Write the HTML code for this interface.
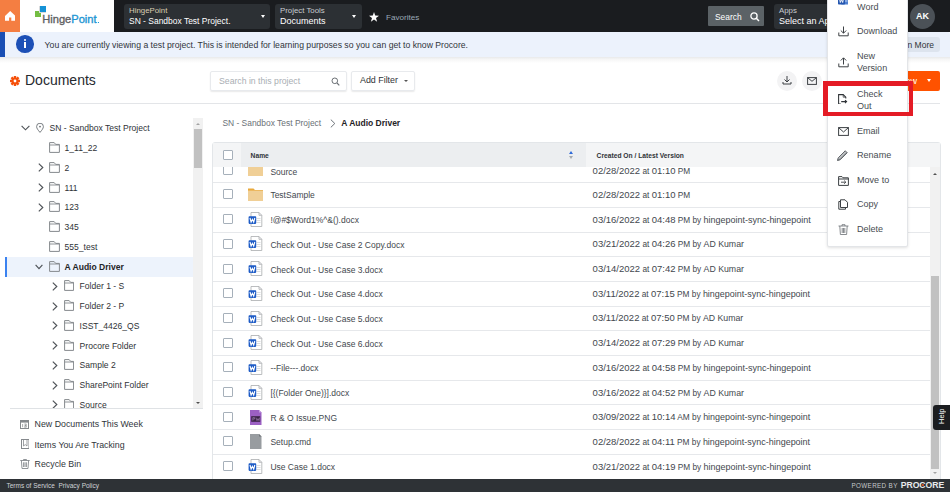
<!DOCTYPE html>
<html><head><meta charset="utf-8">
<style>
*{box-sizing:border-box;margin:0;padding:0}
html,body{width:950px;height:492px;overflow:hidden;background:#fff;font-family:"Liberation Sans",sans-serif;color:#2f3337}
.a{position:absolute;white-space:nowrap}
#nav{position:absolute;left:0;top:0;width:950px;height:31.6px;background:#1a1c1f}
#home{position:absolute;left:0;top:0;width:20px;height:31.6px;background:#f47e42}
#logo{position:absolute;left:20px;top:0;width:94px;height:31.6px;background:#fff}
.dd{position:absolute;top:4px;height:25px;background:#2c3034;border-radius:3px}
.dd .l1{position:absolute;left:5px;top:1.5px;font-size:7.85px;color:#c8ccd0;line-height:9px}
.dd .l2{position:absolute;left:5px;top:11.8px;font-size:9px;color:#fff;line-height:11px}
.caret{position:absolute;width:0;height:0;border-left:2.5px solid transparent;border-right:2.5px solid transparent;border-top:3px solid #fff}
#banner{position:absolute;left:0;top:31.8px;width:950px;height:24.8px;background:#ecf2fc;border-radius:0 2px 0 0}
#tree .r{position:absolute;height:20px;line-height:20px;font-size:8.6px;color:#2f3337}
</style></head><body>
<div id="nav">
  <div id="home">
    <svg class="a" style="left:4.7px;top:11.3px" width="10.4" height="9.8" viewBox="0 0 10.4 9.8"><path d="M5.2 0 L10.4 4.9 V9.8 H6.3 V6.5 H4.1 V9.8 H0 V4.9 Z" fill="#fff"/></svg>
  </div>
  <div id="logo">
    <div class="a" style="left:15px;top:10.9px;width:6.1px;height:6.4px;background:#74bd42"></div>
    <div class="a" style="left:18.9px;top:6.1px;width:7.1px;height:7.3px;background:#1592d6;border:0.6px solid #d8dadc;border-right:0;border-top:0"></div>
    <div class="a" style="left:22.3px;top:13.2px;font-size:11.1px;line-height:12px;color:#5f6163;-webkit-text-stroke:0.35px #5f6163">Hinge<span style="color:#2196d3;-webkit-text-stroke:0.35px #2196d3">Point</span></div><div class="a" style="left:78px;top:22px;width:1.3px;height:1.3px;background:#2196d3"></div>
  </div>
  <div class="dd" style="left:124px;width:146px">
    <div class="l1" style="color:#d9cdb0">HingePoint</div>
    <div class="l2" style="font-size:8.47px">SN - Sandbox Test Project.</div>
    <div class="caret" style="left:136.5px;top:11px"></div>
  </div>
  <div class="dd" style="left:275px;width:87px">
    <div class="l1">Project Tools</div>
    <div class="l2">Documents</div>
    <div class="caret" style="left:77px;top:11px"></div>
  </div>
  <svg class="a" style="left:369px;top:12px" width="10" height="10" viewBox="0 0 10 10"><path d="M5 0 L6.2 3.6 L10 3.7 L7 6 L8.1 9.7 L5 7.5 L1.9 9.7 L3 6 L0 3.7 L3.8 3.6 Z" fill="#fff"/></svg>
  <div class="a" style="left:386px;top:13px;font-size:8.1px;line-height:10px;color:#9aa8b6">Favorites</div>
  <div class="a" style="left:708px;top:6px;width:56px;height:20px;background:#5b6266;border-radius:1px">
    <div class="a" style="left:7px;top:6px;font-size:8.4px;line-height:10px;color:#fff">Search</div>
    <svg class="a" style="left:42px;top:6px" width="10" height="10" viewBox="0 0 10 10"><circle cx="4" cy="4" r="3.1" stroke="#fff" stroke-width="1.3" fill="none"/><path d="M6.3 6.3 L9 9" stroke="#fff" stroke-width="1.5"/></svg>
  </div>
  <div class="dd" style="left:774px;width:120px">
    <div class="l1">Apps</div>
    <div class="l2">Select an App</div>
  </div>
  <div class="a" style="left:910px;top:4px;width:25px;height:25px;border-radius:50%;background:#4b5157;color:#fff;font-size:9px;font-weight:bold;text-align:center;line-height:25px">AK</div>
</div>

<div id="banner">
  <div class="a" style="left:0;top:0;width:5px;height:25px;background:#1a4fb4"></div>
  <div class="a" style="left:16px;top:3.5px;width:17.5px;height:17.5px;border-radius:50%;background:#1d50b6"></div>
  <div class="a" style="left:23.5px;top:7px;width:2.4px;height:2.4px;border-radius:50%;background:#fff"></div>
  <div class="a" style="left:23.5px;top:10.5px;width:2.4px;height:6px;background:#fff"></div>
  <div class="a" style="left:44.6px;top:8.2px;font-size:8.66px;line-height:11px;color:#30353b">You are currently viewing a test project. This is intended for learning purposes so you can get to know Procore.</div>
  <div class="a" style="left:880px;top:5px;width:60px;height:15px;background:#dde4ee;border-radius:3px">
    <div class="a" style="left:10.5px;top:3px;font-size:8.5px;line-height:11px;color:#2f3337">Learn More</div>
  </div>
</div>
<div class="a" style="left:0;top:56.6px;width:950px;height:6.5px;background:linear-gradient(#e8e9ea,#f6f6f6 40%,#fff)"></div>

<!-- header -->
<svg class="a" style="left:10px;top:75.5px" width="10" height="10" viewBox="0 0 10 10"><g fill="#f5500a"><circle cx="5" cy="5" r="3.6"/><rect x="3.8" y="0" width="2.4" height="10"/><rect x="0" y="3.8" width="10" height="2.4"/><rect x="3.8" y="0" width="2.4" height="10" transform="rotate(45 5 5)"/><rect x="3.8" y="0" width="2.4" height="10" transform="rotate(-45 5 5)"/></g><circle cx="5" cy="5" r="1.4" fill="#fff"/></svg>
<div class="a" style="left:25px;top:72px;font-size:14px;line-height:16px;color:#262a2f">Documents</div>

<div class="a" style="left:210px;top:71px;width:137px;height:20px;border:1px solid #e8eaed;border-radius:2px;box-shadow:0 1px 1.5px rgba(0,0,0,.09)">
  <div class="a" style="left:8px;top:3.6px;font-size:8.7px;line-height:11px;color:#a9aeb3">Search in this project</div>
  <svg class="a" style="left:120px;top:5px" width="9" height="9" viewBox="0 0 9 9"><circle cx="3.8" cy="3.8" r="2.8" stroke="#6b7075" stroke-width="1" fill="none"/><path d="M6 6 L8.3 8.3" stroke="#6b7075" stroke-width="1.1"/></svg>
</div>
<div class="a" style="left:351px;top:71px;width:64px;height:20px;border:1px solid #e8eaed;border-radius:2px;box-shadow:0 1px 1.5px rgba(0,0,0,.09)">
  <div class="a" style="left:8px;top:3.4px;font-size:8.9px;line-height:11px;color:#2f3337">Add Filter</div>
  <div class="caret" style="left:52px;top:8px;border-top-color:#555;border-left-width:2.2px;border-right-width:2.2px;border-top-width:2.5px"></div>
</div>

<div class="a" style="left:777px;top:70.5px;width:20px;height:20px;border-radius:50%;background:#f3f3f4"></div>
<svg class="a" style="left:782px;top:75px" width="10" height="10" viewBox="0 0 10 10"><path d="M5 1 V7 M2.5 4.5 L5 7 L7.5 4.5 M1 7 V9 H9 V7" stroke="#3c4044" stroke-width="1" fill="none"/></svg>
<div class="a" style="left:802px;top:70.5px;width:20px;height:20px;border-radius:50%;background:#f3f3f4"></div>
<svg class="a" style="left:807px;top:76.8px" width="10" height="8" viewBox="0 0 10 8"><rect x="0.6" y="0.6" width="8.8" height="6.8" stroke="#3c4044" stroke-width="1" fill="none"/><path d="M0.8 0.8 L5 4.3 L9.2 0.8" stroke="#3c4044" stroke-width="1" fill="none"/></svg>

<div class="a" style="left:900px;top:71px;width:40px;height:19.5px;background:#ff5200;border-radius:2px">
  <div class="a" style="left:-1px;top:4.5px;font-size:9px;line-height:11px;color:#fff">New</div>
  <div class="caret" style="left:27.2px;top:7.8px;border-left-width:2.5px;border-right-width:2.5px;border-top-width:3.2px"></div>
</div>

<div class="a" style="left:10px;top:103px;width:930px;height:1px;background:#e3e5e8"></div>


<div class="a" style="left:0;top:118px;width:203px;height:290px;overflow:hidden">
<svg class="a" style="left:20.80px;top:7.25px" width="9" height="6" viewBox="0 0 9 6"><path d="M0.6 0.8 L4.5 4.8 L8.4 0.8" stroke="#4e5358" stroke-width="1.15" fill="none"/></svg>
<svg class="a" style="left:35.60px;top:4.95px" width="8" height="10" viewBox="0 0 8 10"><path d="M4 9.4 C2 7 0.6 5.3 0.6 3.6 A3.4 3.4 0 0 1 7.4 3.6 C7.4 5.3 6 7 4 9.4 Z" stroke="#6a6f74" stroke-width="0.9" fill="none"/><circle cx="4" cy="3.6" r="0.9" fill="#6a6f74"/></svg>
<div class="a" style="left:49.50px;top:4.25px;font-size:8.55px;line-height:12px;">SN - Sandbox Test Project</div>
<svg class="a" style="left:49.00px;top:24.10px" width="11.0" height="11" viewBox="0 0 11.0 11"><path d="M0.6 10.4 V0.6 H5.2 L6.7 2.4 H10.4 V10.4 Z" stroke="#85898d" stroke-width="1" fill="none"/><path d="M0.6 3 H10.4" stroke="#85898d" stroke-width="0.9"/></svg>
<div class="a" style="left:64.60px;top:24.00px;font-size:8.55px;line-height:12px;">1_11_22</div>
<svg class="a" style="left:37.50px;top:45.25px" width="6" height="9" viewBox="0 0 6 9"><path d="M0.8 0.6 L4.8 4.5 L0.8 8.4" stroke="#4e5358" stroke-width="1.15" fill="none"/></svg>
<svg class="a" style="left:49.00px;top:43.85px" width="11.0" height="11" viewBox="0 0 11.0 11"><path d="M0.6 10.4 V0.6 H5.2 L6.7 2.4 H10.4 V10.4 Z" stroke="#85898d" stroke-width="1" fill="none"/><path d="M0.6 3 H10.4" stroke="#85898d" stroke-width="0.9"/></svg>
<div class="a" style="left:64.60px;top:43.75px;font-size:8.55px;line-height:12px;">2</div>
<svg class="a" style="left:37.50px;top:65.00px" width="6" height="9" viewBox="0 0 6 9"><path d="M0.8 0.6 L4.8 4.5 L0.8 8.4" stroke="#4e5358" stroke-width="1.15" fill="none"/></svg>
<svg class="a" style="left:49.00px;top:63.60px" width="11.0" height="11" viewBox="0 0 11.0 11"><path d="M0.6 10.4 V0.6 H5.2 L6.7 2.4 H10.4 V10.4 Z" stroke="#85898d" stroke-width="1" fill="none"/><path d="M0.6 3 H10.4" stroke="#85898d" stroke-width="0.9"/></svg>
<div class="a" style="left:64.60px;top:63.50px;font-size:8.55px;line-height:12px;">111</div>
<svg class="a" style="left:37.50px;top:84.75px" width="6" height="9" viewBox="0 0 6 9"><path d="M0.8 0.6 L4.8 4.5 L0.8 8.4" stroke="#4e5358" stroke-width="1.15" fill="none"/></svg>
<svg class="a" style="left:49.00px;top:83.35px" width="11.0" height="11" viewBox="0 0 11.0 11"><path d="M0.6 10.4 V0.6 H5.2 L6.7 2.4 H10.4 V10.4 Z" stroke="#85898d" stroke-width="1" fill="none"/><path d="M0.6 3 H10.4" stroke="#85898d" stroke-width="0.9"/></svg>
<div class="a" style="left:64.60px;top:83.25px;font-size:8.55px;line-height:12px;">123</div>
<svg class="a" style="left:49.00px;top:103.10px" width="11.0" height="11" viewBox="0 0 11.0 11"><path d="M0.6 10.4 V0.6 H5.2 L6.7 2.4 H10.4 V10.4 Z" stroke="#85898d" stroke-width="1" fill="none"/><path d="M0.6 3 H10.4" stroke="#85898d" stroke-width="0.9"/></svg>
<div class="a" style="left:64.60px;top:103.00px;font-size:8.55px;line-height:12px;">345</div>
<svg class="a" style="left:49.00px;top:122.85px" width="11.0" height="11" viewBox="0 0 11.0 11"><path d="M0.6 10.4 V0.6 H5.2 L6.7 2.4 H10.4 V10.4 Z" stroke="#85898d" stroke-width="1" fill="none"/><path d="M0.6 3 H10.4" stroke="#85898d" stroke-width="0.9"/></svg>
<div class="a" style="left:64.60px;top:122.75px;font-size:8.55px;line-height:12px;">555_test</div>
<div class="a" style="left:5px;top:138.50px;width:188px;height:20px;background:#edf3fc"></div>
<div class="a" style="left:5px;top:138.50px;width:2px;height:20px;background:#3b82f0"></div>
<svg class="a" style="left:35.40px;top:145.50px" width="8" height="6" viewBox="0 0 8 6"><path d="M0.6 0.8 L4 4.6 L7.4 0.8" stroke="#4e5358" stroke-width="1.15" fill="none"/></svg>
<svg class="a" style="left:49.00px;top:142.60px" width="11.0" height="11" viewBox="0 0 11.0 11"><path d="M0.6 10.4 V0.6 H5.2 L6.7 2.4 H10.4 V10.4 Z" stroke="#85898d" stroke-width="1" fill="none"/><path d="M0.6 3 H10.4" stroke="#85898d" stroke-width="0.9"/></svg>
<div class="a" style="left:64.60px;top:142.50px;font-size:8.55px;line-height:12px;font-weight:bold;color:#1f2327;">A Audio Driver</div>
<svg class="a" style="left:52.40px;top:163.75px" width="6" height="9" viewBox="0 0 6 9"><path d="M0.8 0.6 L4.8 4.5 L0.8 8.4" stroke="#4e5358" stroke-width="1.15" fill="none"/></svg>
<svg class="a" style="left:64.00px;top:162.35px" width="10.2" height="11" viewBox="0 0 10.2 11"><path d="M0.6 10.4 V0.6 H5.2 L6.7 2.4 H9.6 V10.4 Z" stroke="#85898d" stroke-width="1" fill="none"/><path d="M0.6 3 H9.6" stroke="#85898d" stroke-width="0.9"/></svg>
<div class="a" style="left:79.60px;top:162.25px;font-size:8.55px;line-height:12px;">Folder 1 - S</div>
<svg class="a" style="left:52.40px;top:183.50px" width="6" height="9" viewBox="0 0 6 9"><path d="M0.8 0.6 L4.8 4.5 L0.8 8.4" stroke="#4e5358" stroke-width="1.15" fill="none"/></svg>
<svg class="a" style="left:64.00px;top:182.10px" width="10.2" height="11" viewBox="0 0 10.2 11"><path d="M0.6 10.4 V0.6 H5.2 L6.7 2.4 H9.6 V10.4 Z" stroke="#85898d" stroke-width="1" fill="none"/><path d="M0.6 3 H9.6" stroke="#85898d" stroke-width="0.9"/></svg>
<div class="a" style="left:79.60px;top:182.00px;font-size:8.55px;line-height:12px;">Folder 2 - P</div>
<svg class="a" style="left:52.40px;top:203.25px" width="6" height="9" viewBox="0 0 6 9"><path d="M0.8 0.6 L4.8 4.5 L0.8 8.4" stroke="#4e5358" stroke-width="1.15" fill="none"/></svg>
<svg class="a" style="left:64.00px;top:201.85px" width="10.2" height="11" viewBox="0 0 10.2 11"><path d="M0.6 10.4 V0.6 H5.2 L6.7 2.4 H9.6 V10.4 Z" stroke="#85898d" stroke-width="1" fill="none"/><path d="M0.6 3 H9.6" stroke="#85898d" stroke-width="0.9"/></svg>
<div class="a" style="left:79.60px;top:201.75px;font-size:8.55px;line-height:12px;">ISST_4426_QS</div>
<svg class="a" style="left:52.40px;top:223.00px" width="6" height="9" viewBox="0 0 6 9"><path d="M0.8 0.6 L4.8 4.5 L0.8 8.4" stroke="#4e5358" stroke-width="1.15" fill="none"/></svg>
<svg class="a" style="left:64.00px;top:221.60px" width="10.2" height="11" viewBox="0 0 10.2 11"><path d="M0.6 10.4 V0.6 H5.2 L6.7 2.4 H9.6 V10.4 Z" stroke="#85898d" stroke-width="1" fill="none"/><path d="M0.6 3 H9.6" stroke="#85898d" stroke-width="0.9"/></svg>
<div class="a" style="left:79.60px;top:221.50px;font-size:8.55px;line-height:12px;">Procore Folder</div>
<svg class="a" style="left:52.40px;top:242.75px" width="6" height="9" viewBox="0 0 6 9"><path d="M0.8 0.6 L4.8 4.5 L0.8 8.4" stroke="#4e5358" stroke-width="1.15" fill="none"/></svg>
<svg class="a" style="left:64.00px;top:241.35px" width="10.2" height="11" viewBox="0 0 10.2 11"><path d="M0.6 10.4 V0.6 H5.2 L6.7 2.4 H9.6 V10.4 Z" stroke="#85898d" stroke-width="1" fill="none"/><path d="M0.6 3 H9.6" stroke="#85898d" stroke-width="0.9"/></svg>
<div class="a" style="left:79.60px;top:241.25px;font-size:8.55px;line-height:12px;">Sample 2</div>
<svg class="a" style="left:52.40px;top:262.50px" width="6" height="9" viewBox="0 0 6 9"><path d="M0.8 0.6 L4.8 4.5 L0.8 8.4" stroke="#4e5358" stroke-width="1.15" fill="none"/></svg>
<svg class="a" style="left:64.00px;top:261.10px" width="10.2" height="11" viewBox="0 0 10.2 11"><path d="M0.6 10.4 V0.6 H5.2 L6.7 2.4 H9.6 V10.4 Z" stroke="#85898d" stroke-width="1" fill="none"/><path d="M0.6 3 H9.6" stroke="#85898d" stroke-width="0.9"/></svg>
<div class="a" style="left:79.60px;top:261.00px;font-size:8.55px;line-height:12px;">SharePoint Folder</div>
<svg class="a" style="left:52.40px;top:282.25px" width="6" height="9" viewBox="0 0 6 9"><path d="M0.8 0.6 L4.8 4.5 L0.8 8.4" stroke="#4e5358" stroke-width="1.15" fill="none"/></svg>
<svg class="a" style="left:64.00px;top:280.85px" width="10.2" height="11" viewBox="0 0 10.2 11"><path d="M0.6 10.4 V0.6 H5.2 L6.7 2.4 H9.6 V10.4 Z" stroke="#85898d" stroke-width="1" fill="none"/><path d="M0.6 3 H9.6" stroke="#85898d" stroke-width="0.9"/></svg>
<div class="a" style="left:79.60px;top:280.75px;font-size:8.55px;line-height:12px;">Source</div>
</div>
<div class="a" style="left:193px;top:118px;width:10px;height:290px;background:#f1f1f1"></div>
<div class="a" style="left:194px;top:129px;width:8px;height:39px;background:#c1c1c1"></div>
<div class="caret" style="left:195.5px;top:122.5px;border-top:0;border-bottom:2.5px solid #a3a3a3;border-left-width:2.5px;border-right-width:2.5px"></div>
<div class="caret" style="left:195.5px;top:401.5px;border-top:2.5px solid #505050;border-left-width:2.5px;border-right-width:2.5px"></div>
<div class="a" style="left:10px;top:408px;width:193px;height:1px;background:#dfe2e5"></div>
<svg class="a" style="left:20px;top:420.00px" width="9" height="9" viewBox="0 0 9 9"><rect x="0.5" y="0.5" width="8" height="8" stroke="#85898d" stroke-width="1" fill="none"/><path d="M0.5 1.8 H8.5" stroke="#85898d" stroke-width="1.6"/><path d="M2.6 4 V7.2 M4.4 4 H6.4 L4.6 7.2 M4.4 5.3 H6.3 V7.2 H4.4" stroke="#85898d" stroke-width="0.7" fill="none"/></svg>
<div class="a" style="left:34.6px;top:418.30px;font-size:8.8px;line-height:12px;color:#30353a">New Documents This Week</div>
<svg class="a" style="left:20.7px;top:439.00px" width="8.5" height="10" viewBox="0 0 8.5 10"><rect x="0.5" y="0.5" width="7.5" height="9" stroke="#85898d" stroke-width="1" fill="none"/><path d="M2.5 1 V7 L4.25 5.6 L6 7 V1" stroke="#85898d" stroke-width="0.8" fill="none"/></svg>
<div class="a" style="left:34.6px;top:438.50px;font-size:8.8px;line-height:12px;color:#30353a">Items You Are Tracking</div>
<svg class="a" style="left:20px;top:459.10px" width="10" height="10" viewBox="0 0 10 10"><path d="M0.3 1.5 H9.7 M3.5 1.5 V0.5 H6.5 V1.5 M1.4 1.5 L2 9.5 H8 L8.6 1.5 M3.6 3.3 V8 M5 3.3 V8 M6.4 3.3 V8" stroke="#85898d" stroke-width="0.9" fill="none"/></svg>
<div class="a" style="left:34.6px;top:458.10px;font-size:8.8px;line-height:12px;color:#30353a">Recycle Bin</div>
<div class="a" style="left:222.4px;top:117.7px;font-size:8.45px;line-height:11px;color:#6b7177">SN - Sandbox Test Project</div>
<svg class="a" style="left:329.5px;top:118.5px" width="6" height="9" viewBox="0 0 6 9"><path d="M0.8 0.6 L4.8 4.5 L0.8 8.4" stroke="#6b7177" stroke-width="1" fill="none"/></svg>
<div class="a" style="left:341.3px;top:117.7px;font-size:8.5px;line-height:11px;font-weight:bold;color:#1f2327">A Audio Driver</div>
<div class="a" style="left:212px;top:141.5px;width:728.5px;height:340px;border:1px solid #e3e6e9;border-radius:3px"></div>
<div class="a" style="left:213px;top:167px;width:717px;height:311.5px;overflow:hidden">
<div class="a" style="left:9.80px;top:-2.25px;width:10px;height:10px;border:1px solid #a6b0ba;border-radius:1px"></div>
<svg class="a" style="left:35.00px;top:-3.75px" width="15" height="13" viewBox="0 0 15 13"><path d="M0 0.5 H5.5 L7 2 H15 V13 H0 Z" fill="#e9a93c"/><rect x="0" y="2.6" width="15" height="10.4" fill="#f0cf96"/></svg>
<div class="a" style="left:57.40px;top:-0.85px;font-size:8.5px;line-height:12px;color:#43484e">Source</div>
<div class="a" style="left:379.60px;top:-1.85px;font-size:8.3px;line-height:12px;color:#43484e"><span style="font-size:9.5px">02/28/2022</span> at <span style="font-size:9.5px">01:10</span> PM</div>
<div class="a" style="left:0;top:15.10px;width:717px;height:1px;background:#e6e8eb"></div>
<div class="a" style="left:9.80px;top:22.45px;width:10px;height:10px;border:1px solid #a6b0ba;border-radius:1px"></div>
<svg class="a" style="left:35.00px;top:20.95px" width="15" height="13" viewBox="0 0 15 13"><path d="M0 0.5 H5.5 L7 2 H15 V13 H0 Z" fill="#e9a93c"/><rect x="0" y="2.6" width="15" height="10.4" fill="#f0cf96"/></svg>
<div class="a" style="left:57.40px;top:22.45px;font-size:8.5px;line-height:12px;color:#43484e">TestSample</div>
<div class="a" style="left:379.60px;top:21.95px;font-size:8.3px;line-height:12px;color:#43484e"><span style="font-size:9.5px">02/28/2022</span> at <span style="font-size:9.5px">01:10</span> PM</div>
<div class="a" style="left:0;top:39.80px;width:717px;height:1px;background:#e6e8eb"></div>
<div class="a" style="left:9.80px;top:47.15px;width:10px;height:10px;border:1px solid #a6b0ba;border-radius:1px"></div>
<svg class="a" style="left:35.30px;top:44.75px" width="15" height="15" viewBox="0 0 15 15"><path d="M3 0.5 H11 L13.8 3.3 V14.5 H3 Z" fill="#fff" stroke="#a9acaf" stroke-width="0.8"/><path d="M11 0.5 V3.3 H13.8" fill="none" stroke="#a9acaf" stroke-width="0.8"/><path d="M8.5 6.5 H12.5 M8.5 8.5 H12.5 M8.5 10.5 H12.5" stroke="#c4c7ca" stroke-width="0.6"/><rect x="0.6" y="4.3" width="7.6" height="7.6" rx="0.8" fill="#1d5bc6"/><path d="M2 6 L3.1 10.2 L4.4 7.3 L5.7 10.2 L6.8 6" stroke="#fff" stroke-width="1.1" fill="none"/></svg>
<div class="a" style="left:57.40px;top:47.15px;font-size:8.5px;line-height:12px;color:#43484e">!@#$Word1%^&amp;().docx</div>
<div class="a" style="left:379.60px;top:46.65px;font-size:8.3px;line-height:12px;color:#43484e"><span style="font-size:9.5px">03/16/2022</span> at <span style="font-size:9.5px">04:48</span> PM by <span style="font-size:8.98px">hingepoint-sync-hingepoint</span></div>
<div class="a" style="left:0;top:64.50px;width:717px;height:1px;background:#e6e8eb"></div>
<div class="a" style="left:9.80px;top:71.85px;width:10px;height:10px;border:1px solid #a6b0ba;border-radius:1px"></div>
<svg class="a" style="left:35.30px;top:69.45px" width="15" height="15" viewBox="0 0 15 15"><path d="M3 0.5 H11 L13.8 3.3 V14.5 H3 Z" fill="#fff" stroke="#a9acaf" stroke-width="0.8"/><path d="M11 0.5 V3.3 H13.8" fill="none" stroke="#a9acaf" stroke-width="0.8"/><path d="M8.5 6.5 H12.5 M8.5 8.5 H12.5 M8.5 10.5 H12.5" stroke="#c4c7ca" stroke-width="0.6"/><rect x="0.6" y="4.3" width="7.6" height="7.6" rx="0.8" fill="#1d5bc6"/><path d="M2 6 L3.1 10.2 L4.4 7.3 L5.7 10.2 L6.8 6" stroke="#fff" stroke-width="1.1" fill="none"/></svg>
<div class="a" style="left:57.40px;top:71.85px;font-size:8.5px;line-height:12px;color:#43484e">Check Out - Use Case 2 Copy.docx</div>
<div class="a" style="left:379.60px;top:71.35px;font-size:8.3px;line-height:12px;color:#43484e"><span style="font-size:9.5px">03/21/2022</span> at <span style="font-size:9.5px">04:26</span> PM by <span style="font-size:8.76px">AD Kumar</span></div>
<div class="a" style="left:0;top:89.20px;width:717px;height:1px;background:#e6e8eb"></div>
<div class="a" style="left:9.80px;top:96.55px;width:10px;height:10px;border:1px solid #a6b0ba;border-radius:1px"></div>
<svg class="a" style="left:35.30px;top:94.15px" width="15" height="15" viewBox="0 0 15 15"><path d="M3 0.5 H11 L13.8 3.3 V14.5 H3 Z" fill="#fff" stroke="#a9acaf" stroke-width="0.8"/><path d="M11 0.5 V3.3 H13.8" fill="none" stroke="#a9acaf" stroke-width="0.8"/><path d="M8.5 6.5 H12.5 M8.5 8.5 H12.5 M8.5 10.5 H12.5" stroke="#c4c7ca" stroke-width="0.6"/><rect x="0.6" y="4.3" width="7.6" height="7.6" rx="0.8" fill="#1d5bc6"/><path d="M2 6 L3.1 10.2 L4.4 7.3 L5.7 10.2 L6.8 6" stroke="#fff" stroke-width="1.1" fill="none"/></svg>
<div class="a" style="left:57.40px;top:96.55px;font-size:8.5px;line-height:12px;color:#43484e">Check Out - Use Case 3.docx</div>
<div class="a" style="left:379.60px;top:96.05px;font-size:8.3px;line-height:12px;color:#43484e"><span style="font-size:9.5px">03/14/2022</span> at <span style="font-size:9.5px">07:42</span> PM by <span style="font-size:8.76px">AD Kumar</span></div>
<div class="a" style="left:0;top:113.90px;width:717px;height:1px;background:#e6e8eb"></div>
<div class="a" style="left:9.80px;top:121.25px;width:10px;height:10px;border:1px solid #a6b0ba;border-radius:1px"></div>
<svg class="a" style="left:35.30px;top:118.85px" width="15" height="15" viewBox="0 0 15 15"><path d="M3 0.5 H11 L13.8 3.3 V14.5 H3 Z" fill="#fff" stroke="#a9acaf" stroke-width="0.8"/><path d="M11 0.5 V3.3 H13.8" fill="none" stroke="#a9acaf" stroke-width="0.8"/><path d="M8.5 6.5 H12.5 M8.5 8.5 H12.5 M8.5 10.5 H12.5" stroke="#c4c7ca" stroke-width="0.6"/><rect x="0.6" y="4.3" width="7.6" height="7.6" rx="0.8" fill="#1d5bc6"/><path d="M2 6 L3.1 10.2 L4.4 7.3 L5.7 10.2 L6.8 6" stroke="#fff" stroke-width="1.1" fill="none"/></svg>
<div class="a" style="left:57.40px;top:121.25px;font-size:8.5px;line-height:12px;color:#43484e">Check Out - Use Case 4.docx</div>
<div class="a" style="left:379.60px;top:120.75px;font-size:8.3px;line-height:12px;color:#43484e"><span style="font-size:9.5px">03/11/2022</span> at <span style="font-size:9.5px">07:15</span> PM by <span style="font-size:8.98px">hingepoint-sync-hingepoint</span></div>
<div class="a" style="left:0;top:138.60px;width:717px;height:1px;background:#e6e8eb"></div>
<div class="a" style="left:9.80px;top:145.95px;width:10px;height:10px;border:1px solid #a6b0ba;border-radius:1px"></div>
<svg class="a" style="left:35.30px;top:143.55px" width="15" height="15" viewBox="0 0 15 15"><path d="M3 0.5 H11 L13.8 3.3 V14.5 H3 Z" fill="#fff" stroke="#a9acaf" stroke-width="0.8"/><path d="M11 0.5 V3.3 H13.8" fill="none" stroke="#a9acaf" stroke-width="0.8"/><path d="M8.5 6.5 H12.5 M8.5 8.5 H12.5 M8.5 10.5 H12.5" stroke="#c4c7ca" stroke-width="0.6"/><rect x="0.6" y="4.3" width="7.6" height="7.6" rx="0.8" fill="#1d5bc6"/><path d="M2 6 L3.1 10.2 L4.4 7.3 L5.7 10.2 L6.8 6" stroke="#fff" stroke-width="1.1" fill="none"/></svg>
<div class="a" style="left:57.40px;top:145.95px;font-size:8.5px;line-height:12px;color:#43484e">Check Out - Use Case 5.docx</div>
<div class="a" style="left:379.60px;top:145.45px;font-size:8.3px;line-height:12px;color:#43484e"><span style="font-size:9.5px">03/11/2022</span> at <span style="font-size:9.5px">07:50</span> PM by <span style="font-size:8.76px">AD Kumar</span></div>
<div class="a" style="left:0;top:163.30px;width:717px;height:1px;background:#e6e8eb"></div>
<div class="a" style="left:9.80px;top:170.65px;width:10px;height:10px;border:1px solid #a6b0ba;border-radius:1px"></div>
<svg class="a" style="left:35.30px;top:168.25px" width="15" height="15" viewBox="0 0 15 15"><path d="M3 0.5 H11 L13.8 3.3 V14.5 H3 Z" fill="#fff" stroke="#a9acaf" stroke-width="0.8"/><path d="M11 0.5 V3.3 H13.8" fill="none" stroke="#a9acaf" stroke-width="0.8"/><path d="M8.5 6.5 H12.5 M8.5 8.5 H12.5 M8.5 10.5 H12.5" stroke="#c4c7ca" stroke-width="0.6"/><rect x="0.6" y="4.3" width="7.6" height="7.6" rx="0.8" fill="#1d5bc6"/><path d="M2 6 L3.1 10.2 L4.4 7.3 L5.7 10.2 L6.8 6" stroke="#fff" stroke-width="1.1" fill="none"/></svg>
<div class="a" style="left:57.40px;top:170.65px;font-size:8.5px;line-height:12px;color:#43484e">Check Out - Use Case 6.docx</div>
<div class="a" style="left:379.60px;top:170.15px;font-size:8.3px;line-height:12px;color:#43484e"><span style="font-size:9.5px">03/14/2022</span> at <span style="font-size:9.5px">07:29</span> PM by <span style="font-size:8.76px">AD Kumar</span></div>
<div class="a" style="left:0;top:188.00px;width:717px;height:1px;background:#e6e8eb"></div>
<div class="a" style="left:9.80px;top:195.35px;width:10px;height:10px;border:1px solid #a6b0ba;border-radius:1px"></div>
<svg class="a" style="left:35.30px;top:192.95px" width="15" height="15" viewBox="0 0 15 15"><path d="M3 0.5 H11 L13.8 3.3 V14.5 H3 Z" fill="#fff" stroke="#a9acaf" stroke-width="0.8"/><path d="M11 0.5 V3.3 H13.8" fill="none" stroke="#a9acaf" stroke-width="0.8"/><path d="M8.5 6.5 H12.5 M8.5 8.5 H12.5 M8.5 10.5 H12.5" stroke="#c4c7ca" stroke-width="0.6"/><rect x="0.6" y="4.3" width="7.6" height="7.6" rx="0.8" fill="#1d5bc6"/><path d="M2 6 L3.1 10.2 L4.4 7.3 L5.7 10.2 L6.8 6" stroke="#fff" stroke-width="1.1" fill="none"/></svg>
<div class="a" style="left:57.40px;top:195.35px;font-size:8.5px;line-height:12px;color:#43484e">--File---.docx</div>
<div class="a" style="left:379.60px;top:194.85px;font-size:8.3px;line-height:12px;color:#43484e"><span style="font-size:9.5px">03/16/2022</span> at <span style="font-size:9.5px">04:58</span> PM by <span style="font-size:8.98px">hingepoint-sync-hingepoint</span></div>
<div class="a" style="left:0;top:212.70px;width:717px;height:1px;background:#e6e8eb"></div>
<div class="a" style="left:9.80px;top:220.05px;width:10px;height:10px;border:1px solid #a6b0ba;border-radius:1px"></div>
<svg class="a" style="left:35.30px;top:217.65px" width="15" height="15" viewBox="0 0 15 15"><path d="M3 0.5 H11 L13.8 3.3 V14.5 H3 Z" fill="#fff" stroke="#a9acaf" stroke-width="0.8"/><path d="M11 0.5 V3.3 H13.8" fill="none" stroke="#a9acaf" stroke-width="0.8"/><path d="M8.5 6.5 H12.5 M8.5 8.5 H12.5 M8.5 10.5 H12.5" stroke="#c4c7ca" stroke-width="0.6"/><rect x="0.6" y="4.3" width="7.6" height="7.6" rx="0.8" fill="#1d5bc6"/><path d="M2 6 L3.1 10.2 L4.4 7.3 L5.7 10.2 L6.8 6" stroke="#fff" stroke-width="1.1" fill="none"/></svg>
<div class="a" style="left:57.40px;top:220.05px;font-size:8.5px;line-height:12px;color:#43484e">[{(Folder One)}].docx</div>
<div class="a" style="left:379.60px;top:219.55px;font-size:8.3px;line-height:12px;color:#43484e"><span style="font-size:9.5px">03/16/2022</span> at <span style="font-size:9.5px">04:52</span> PM by <span style="font-size:8.76px">AD Kumar</span></div>
<div class="a" style="left:0;top:237.40px;width:717px;height:1px;background:#e6e8eb"></div>
<div class="a" style="left:9.80px;top:244.75px;width:10px;height:10px;border:1px solid #a6b0ba;border-radius:1px"></div>
<svg class="a" style="left:36.60px;top:242.95px" width="12" height="15" viewBox="0 0 12 15"><path d="M0 0 H9 L11.5 2.5 V15 H0 Z" fill="#9c60c4"/><path d="M9 0 V2.5 H11.5 Z" fill="#c39be0"/><rect x="1.2" y="6.2" width="9" height="5.6" fill="#3b2347"/><path d="M2.8 10.6 V7.6 H4.6 V9 H2.8 M6 7.6 L7 10.6 L8 8.6 L9 10.6 L9.6 7.6" stroke="#a98bc0" stroke-width="0.6" fill="none"/></svg>
<div class="a" style="left:57.40px;top:244.75px;font-size:8.5px;line-height:12px;color:#43484e">R &amp; O Issue.PNG</div>
<div class="a" style="left:379.60px;top:244.25px;font-size:8.3px;line-height:12px;color:#43484e"><span style="font-size:9.5px">03/09/2022</span> at <span style="font-size:9.5px">10:14</span> AM by <span style="font-size:8.98px">hingepoint-sync-hingepoint</span></div>
<div class="a" style="left:0;top:262.10px;width:717px;height:1px;background:#e6e8eb"></div>
<div class="a" style="left:9.80px;top:269.45px;width:10px;height:10px;border:1px solid #a6b0ba;border-radius:1px"></div>
<svg class="a" style="left:36.60px;top:267.05px" width="12" height="15" viewBox="0 0 12 15"><path d="M0 0 H9 L11.5 2.5 V15 H0 Z" fill="#989ca0"/><path d="M9 0 V2.5 H11.5 Z" fill="#6f7377"/></svg>
<div class="a" style="left:57.40px;top:269.45px;font-size:8.5px;line-height:12px;color:#43484e">Setup.cmd</div>
<div class="a" style="left:379.60px;top:268.95px;font-size:8.3px;line-height:12px;color:#43484e"><span style="font-size:9.5px">02/28/2022</span> at <span style="font-size:9.5px">04:11</span> PM by <span style="font-size:8.98px">hingepoint-sync-hingepoint</span></div>
<div class="a" style="left:0;top:286.80px;width:717px;height:1px;background:#e6e8eb"></div>
<div class="a" style="left:9.80px;top:294.15px;width:10px;height:10px;border:1px solid #a6b0ba;border-radius:1px"></div>
<svg class="a" style="left:35.30px;top:291.75px" width="15" height="15" viewBox="0 0 15 15"><path d="M3 0.5 H11 L13.8 3.3 V14.5 H3 Z" fill="#fff" stroke="#a9acaf" stroke-width="0.8"/><path d="M11 0.5 V3.3 H13.8" fill="none" stroke="#a9acaf" stroke-width="0.8"/><path d="M8.5 6.5 H12.5 M8.5 8.5 H12.5 M8.5 10.5 H12.5" stroke="#c4c7ca" stroke-width="0.6"/><rect x="0.6" y="4.3" width="7.6" height="7.6" rx="0.8" fill="#1d5bc6"/><path d="M2 6 L3.1 10.2 L4.4 7.3 L5.7 10.2 L6.8 6" stroke="#fff" stroke-width="1.1" fill="none"/></svg>
<div class="a" style="left:57.40px;top:294.15px;font-size:8.5px;line-height:12px;color:#43484e">Use Case 1.docx</div>
<div class="a" style="left:379.60px;top:293.65px;font-size:8.3px;line-height:12px;color:#43484e"><span style="font-size:9.5px">03/21/2022</span> at <span style="font-size:9.5px">04:19</span> PM by <span style="font-size:8.98px">hingepoint-sync-hingepoint</span></div>
</div>
<div class="a" style="left:213px;top:142.5px;width:27.6px;height:24.6px;background:#f4f5f6"></div>
<div class="a" style="left:240.6px;top:142.5px;width:345.4px;height:24.6px;background:#eceef0"></div>
<div class="a" style="left:586px;top:142.5px;width:353.5px;height:24.6px;background:#f4f5f6"></div>
<div class="a" style="left:222.8px;top:150.4px;width:10px;height:10px;border:1px solid #a6b0ba;border-radius:1px;background:#fff"></div>
<div class="a" style="left:250.6px;top:150.5px;font-size:6.7px;line-height:10px;font-weight:bold;color:#2f3337">Name</div>
<div class="caret" style="left:568.6px;top:151.4px;border-top:0;border-bottom:3px solid #2e6ad9;border-left-width:2.4px;border-right-width:2.4px"></div>
<div class="caret" style="left:568.6px;top:155.6px;border-top:3px solid #a5aaaf;border-left-width:2.4px;border-right-width:2.4px"></div>
<div class="a" style="left:596.6px;top:150.5px;font-size:6.7px;line-height:10px;font-weight:bold;color:#2f3337">Created On / Latest Version</div>
<div class="a" style="left:930px;top:167px;width:10px;height:311.5px;background:#f1f1f1"></div>
<div class="a" style="left:931px;top:275.6px;width:8px;height:193px;background:#c1c1c1"></div>
<div class="caret" style="left:932.5px;top:172.5px;border-top:0;border-bottom:2.5px solid #505050;border-left-width:2.5px;border-right-width:2.5px"></div>
<div class="caret" style="left:932.5px;top:471.5px;border-top:2.5px solid #a3a3a3;border-left-width:2.5px;border-right-width:2.5px"></div>
<div class="a" style="left:933px;top:404.5px;width:17px;height:25px;background:#1b1d20;border-radius:3px 0 0 3px"></div>
<div class="a" style="left:933px;top:403.5px;width:17px;height:25px;color:#fff;font-size:7.5px;line-height:17px;text-align:center;writing-mode:vertical-rl;transform:rotate(180deg)">Help</div>
<div class="a" style="left:0;top:478.5px;width:950px;height:14px;background:#2e3236"></div>
<div class="a" style="left:6.5px;top:481px;font-size:6.5px;line-height:9px;color:#d0d3d6">Terms of Service&nbsp; Privacy Policy</div>
<div class="a" style="left:851.5px;top:480.5px;font-size:6.3px;line-height:9px;color:#c5c8cb;letter-spacing:0.35px">POWERED BY</div>
<div class="a" style="left:900.7px;top:480.3px;font-size:8.7px;line-height:11px;color:#e8eaec;font-weight:bold;letter-spacing:-0.05px">PROCORE</div>
<div class="a" style="left:922.3px;top:484.3px;width:2.2px;height:2.2px;border-radius:50%;background:#f05a22"></div>
<div class="a" style="left:826.8px;top:-5px;width:81px;height:251.6px;background:#fff;border:1px solid #e3e5e8;border-radius:2px;box-shadow:0 1px 3px rgba(0,0,0,.12)"></div>
<div class="a" style="left:857px;top:1.00px;font-size:9.05px;line-height:13px;color:#474c51">Word</div>
<svg class="a" style="left:837.5px;top:-6px" width="10.5" height="11" viewBox="0 0 10.5 11"><rect x="3" y="0" width="7.5" height="10.5" rx="0.8" fill="#4d7fd0"/><path d="M6 5 H9.5 M6 7 H9.5" stroke="#dfe8f7" stroke-width="0.8"/><rect x="0" y="1.5" width="7" height="9" rx="0.8" fill="#2456b0"/><path d="M1.3 3.5 L2.3 8.5 L3.5 5.5 L4.7 8.5 L5.7 3.5" stroke="#fff" stroke-width="0.9" fill="none"/></svg>
<div class="a" style="left:857px;top:25.00px;font-size:9.05px;line-height:13px;color:#474c51">Download</div>
<svg class="a" style="left:837.5px;top:26.00px" width="11" height="11" viewBox="0 0 11 11"><path d="M5.5 0.5 V7 M2.8 4.5 L5.5 7.2 L8.2 4.5 M0.8 6.5 V9.8 H10.2 V6.5" stroke="#3c4044" stroke-width="1" fill="none"/></svg>
<div class="a" style="left:857px;top:49.80px;font-size:9.05px;line-height:12.2px;color:#474c51;white-space:normal;width:45px">New<br>Version</div>
<svg class="a" style="left:837.5px;top:56.80px" width="11" height="11" viewBox="0 0 11 11"><path d="M5.5 7.5 V1 M2.8 3.5 L5.5 0.8 L8.2 3.5 M0.8 6.5 V9.8 H10.2 V6.5" stroke="#3c4044" stroke-width="1" fill="none"/></svg>
<div class="a" style="left:857px;top:87.50px;font-size:9.05px;line-height:12.2px;color:#474c51;white-space:normal;width:45px">Check<br>Out</div>
<svg class="a" style="left:838px;top:93.6px" width="9.5" height="10.5" viewBox="0 0 9.5 10.5"><path d="M2.8 9.9 H0.6 V0.6 H5.2 L7.8 3.2 V4.6" stroke="#2f3337" stroke-width="1.05" fill="none"/><path d="M5.2 0.6 V3.2 H7.8" stroke="#2f3337" stroke-width="0.7" fill="none"/><path d="M3.2 7.6 H8.6 M7 6.1 L8.6 7.6 L7 9.1" stroke="#2f3337" stroke-width="1.05" fill="none"/></svg>
<div class="a" style="left:857px;top:124.50px;font-size:9.05px;line-height:13px;color:#474c51">Email</div>
<svg class="a" style="left:837.5px;top:126.50px" width="11" height="9" viewBox="0 0 11 9"><rect x="0.6" y="0.6" width="9.8" height="7.8" stroke="#3c4044" stroke-width="1" fill="none"/><path d="M0.8 0.8 L5.5 5 L10.2 0.8" stroke="#3c4044" stroke-width="1" fill="none"/></svg>
<div class="a" style="left:857px;top:149.30px;font-size:9.05px;line-height:13px;color:#474c51">Rename</div>
<svg class="a" style="left:837px;top:149.50px" width="11" height="11" viewBox="0 0 11 11"><path d="M0.5 10.5 L1.2 7.9 L8.3 0.8 L10.2 2.7 L3.1 9.8 Z" stroke="#4a4e52" stroke-width="0.9" fill="#9a9ea2"/><path d="M1.9 8.6 L8.9 1.6" stroke="#fff" stroke-width="0.7"/></svg>
<div class="a" style="left:857px;top:174.10px;font-size:9.05px;line-height:13px;color:#474c51">Move to</div>
<svg class="a" style="left:837.5px;top:175.60px" width="11" height="10" viewBox="0 0 11 10"><path d="M0.6 9.4 V0.6 H4 L5 1.8 H10.4 V9.4 Z M0.6 3 H10.4" stroke="#3c4044" stroke-width="1" fill="none"/><path d="M3 6.2 H7.8 M6.2 4.6 L7.8 6.2 L6.2 7.8" stroke="#3c4044" stroke-width="0.9" fill="none"/></svg>
<div class="a" style="left:857px;top:198.10px;font-size:9.05px;line-height:13px;color:#474c51">Copy</div>
<svg class="a" style="left:837.5px;top:199.10px" width="11" height="11" viewBox="0 0 11 11"><path d="M2.5 2.5 H0.8 V10.2 H7.5 V8.5" stroke="#3c4044" stroke-width="1" fill="none"/><path d="M2.5 0.8 H7 L9.5 3.3 V8.5 H2.5 Z" stroke="#3c4044" stroke-width="1" fill="none"/></svg>
<div class="a" style="left:857px;top:223.00px;font-size:9.05px;line-height:13px;color:#474c51">Delete</div>
<svg class="a" style="left:837.5px;top:224.00px" width="11" height="11" viewBox="0 0 11 11"><path d="M0.5 2 H10.5 M4 2 V0.7 H7 V2 M1.8 2 L2.4 10.5 H8.6 L9.2 2 M4.2 4 V9 M5.5 4 V9 M6.8 4 V9" stroke="#6a6f74" stroke-width="0.8" fill="none"/></svg>
<div class="a" style="left:823px;top:81px;width:89.7px;height:34.8px;border:5px solid #e41b25;border-right-width:4.7px;border-bottom-width:4.7px"></div>
</body></html>
